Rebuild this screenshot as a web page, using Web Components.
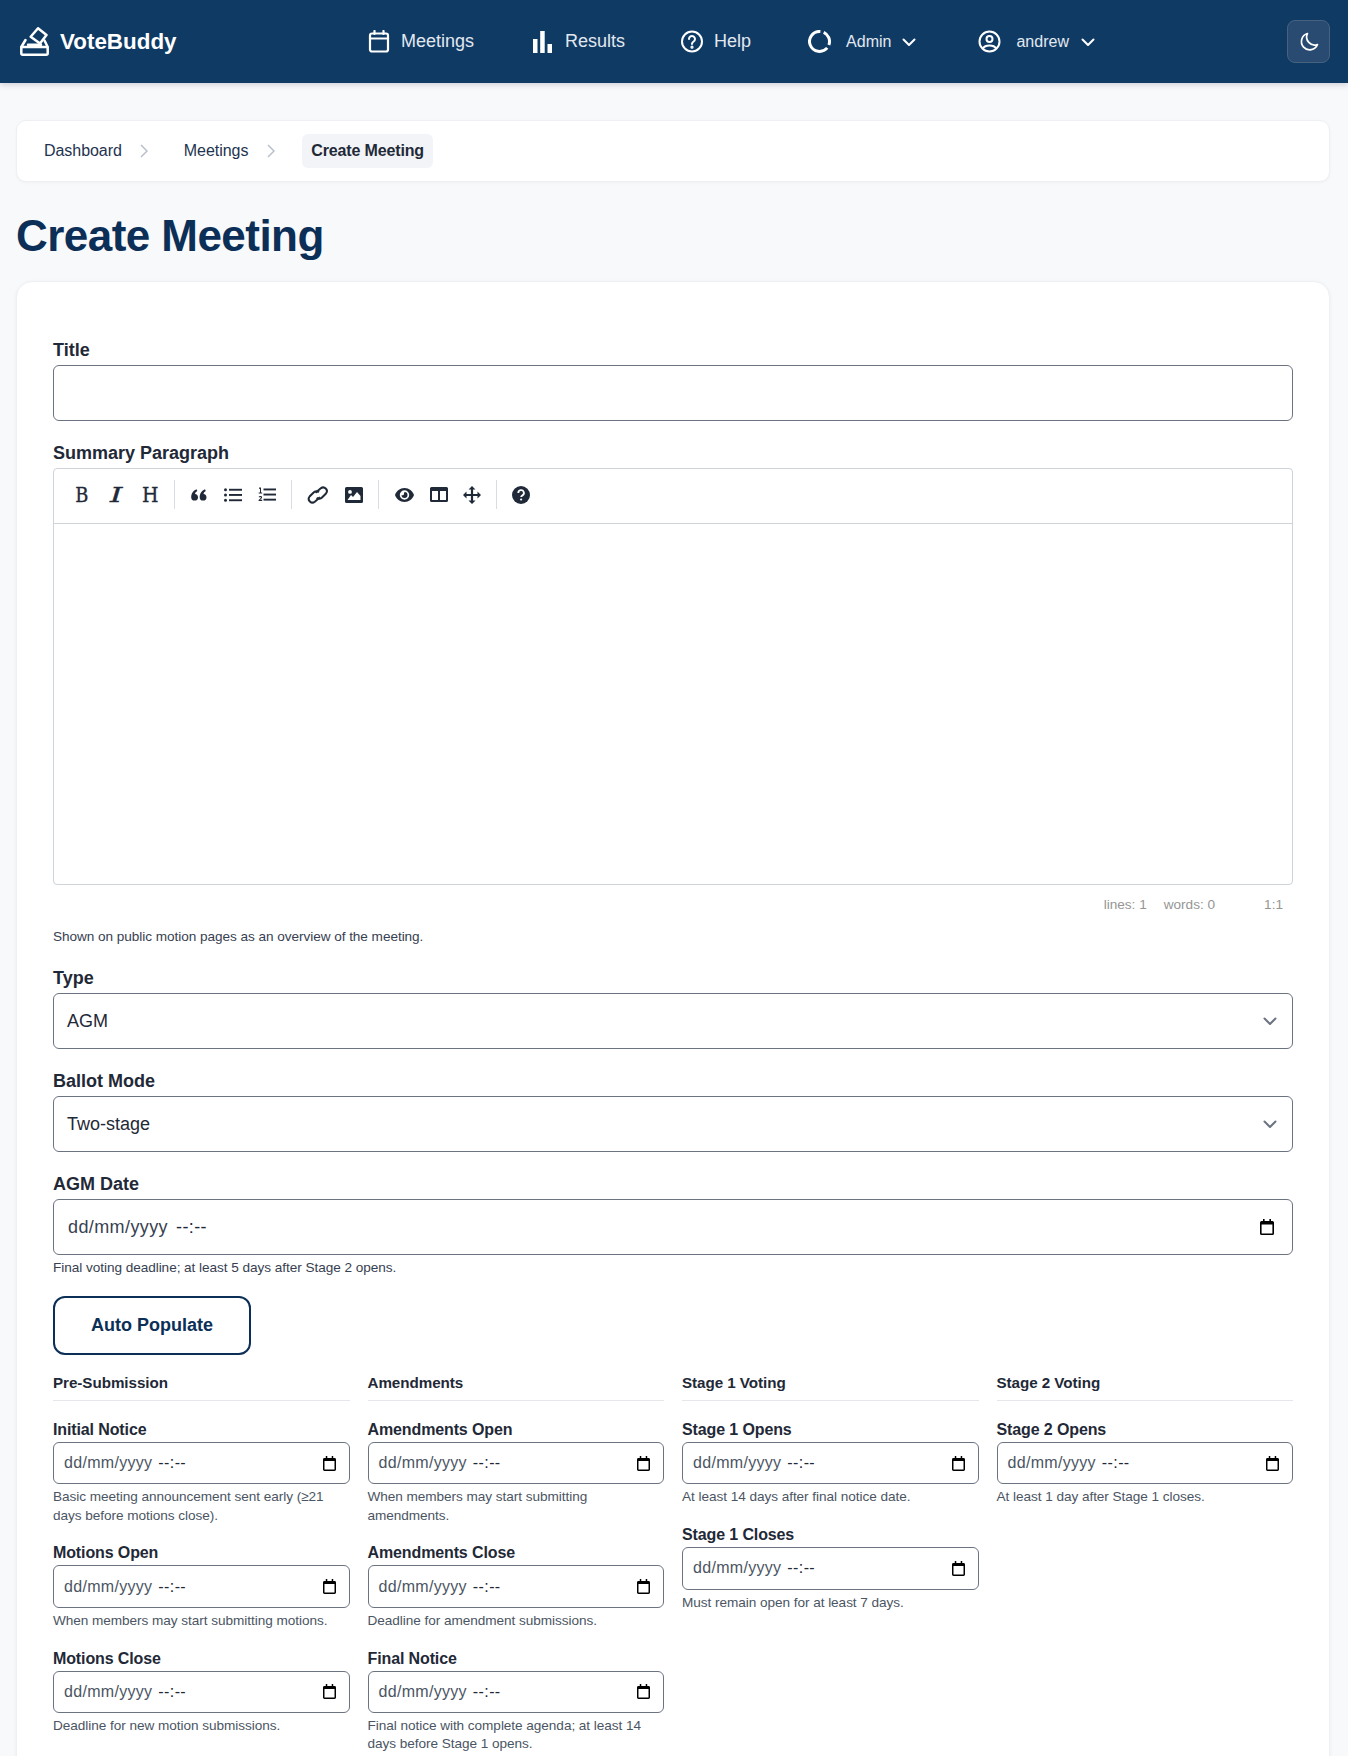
<!DOCTYPE html>
<html lang="en"><head><meta charset="utf-8"><title>Create Meeting</title>
<style>
html,body{margin:0;padding:0;height:1756px;overflow:hidden}
body{background:#f8f9fb;font-family:"Liberation Sans",Arial,sans-serif;color:#1f2937;display:flex;flex-direction:column}
</style></head><body>
<vb-navbar></vb-navbar>
<vb-page>
  <vb-breadcrumb></vb-breadcrumb>
  <h1>Create Meeting</h1>
  <vb-card>
    <vb-field label="Title"><vb-box big></vb-box></vb-field>
    <vb-field label="Summary Paragraph" help="Shown on public motion pages as an overview of the meeting."><vb-editor></vb-editor></vb-field>
    <vb-field label="Type"><vb-box big select>AGM</vb-box></vb-field>
    <vb-field label="Ballot Mode"><vb-box big select>Two-stage</vb-box></vb-field>
    <vb-field label="AGM Date" help="Final voting deadline; at least 5 days after Stage 2 opens." tight><vb-box big date></vb-box></vb-field>
    <vb-button>Auto Populate</vb-button>
    <vb-schedule>
      <vb-column heading="Pre-Submission">
        <vb-date-field label="Initial Notice" help="Basic meeting announcement sent early (≥21 days before motions close)."></vb-date-field>
        <vb-date-field label="Motions Open" help="When members may start submitting motions."></vb-date-field>
        <vb-date-field label="Motions Close" help="Deadline for new motion submissions."></vb-date-field>
      </vb-column>
      <vb-column heading="Amendments">
        <vb-date-field label="Amendments Open" help="When members may start submitting amendments."></vb-date-field>
        <vb-date-field label="Amendments Close" help="Deadline for amendment submissions."></vb-date-field>
        <vb-date-field label="Final Notice" help="Final notice with complete agenda; at least 14 days before Stage 1 opens."></vb-date-field>
      </vb-column>
      <vb-column heading="Stage 1 Voting">
        <vb-date-field label="Stage 1 Opens" help="At least 14 days after final notice date."></vb-date-field>
        <vb-date-field label="Stage 1 Closes" help="Must remain open for at least 7 days."></vb-date-field>
      </vb-column>
      <vb-column heading="Stage 2 Voting">
        <vb-date-field label="Stage 2 Opens" help="At least 1 day after Stage 1 closes."></vb-date-field>
      </vb-column>
    </vb-schedule>
  </vb-card>
</vb-page>
<script>
const CAL='<svg class="cal" viewBox="0 0 14 16"><path fill="#000" d="M3 0h1.600v2h4.800V0H11v2h1.400A1.600 1.600 0 0 1 14 3.600v10.800a1.600 1.600 0 0 1-1.600 1.600H1.600A1.600 1.600 0 0 1 0 14.400V3.600A1.600 1.600 0 0 1 1.600 2H3zM1.600 5.400v9h10.800v-9z"/></svg>';
const CHEV=(c,w,s)=>`<svg width="${s}" height="${s}" viewBox="0 0 16 16" fill="none" stroke="${c}" stroke-width="${w}" stroke-linecap="round" stroke-linejoin="round" style="display:block;flex:none"><path d="M2.500 5.500 8 11l5.500-5.500"/></svg>`;
function def(name,css,html){
  customElements.define(name,class extends HTMLElement{
    connectedCallback(){
      if(this.shadowRoot)return;
      const r=this.attachShadow({mode:'open'});
      r.innerHTML=`<style>${css}</style>`+(typeof html==='function'?html(this):html);
    }
  });
}
def('vb-navbar',`
:host{display:flex;flex:none;align-items:center;height:83px;background:#0f3a64;box-shadow:0 2px 6px rgba(15,30,60,.18);color:#fff;position:relative;z-index:1;box-sizing:border-box;padding:0 18px 0 20px}
.logo{display:flex;align-items:center;gap:11px;font-size:22.400px;font-weight:700;width:348px;color:#fff}
svg{display:block;flex:none}
nav{display:flex;align-items:center;flex:1;color:#e2e8f0}
.i{display:flex;align-items:center;font-size:18px;gap:11px}
.s{font-size:16px}
button{width:43px;height:43px;padding:0;display:flex;align-items:center;justify-content:center;background:#294b72;border:1px solid #47627f;border-radius:8px}
`,`
<div class="logo"><svg width="29" height="29" viewBox="0 0 29 29" fill="none" stroke="#fff" stroke-width="2.500" stroke-linejoin="round" stroke-linecap="round"><path d="M10.700 9.700 18 1.300 26.500 8 20 16.500z"/><path d="M5.500 13 1.300 20M24.500 13.500 27.700 20M8 17.800H21"/><rect x="1.300" y="20" width="26.400" height="7.700" rx="1.500"/></svg><span>VoteBuddy</span></div>
<nav>
<div class="i" style="margin-right:58px"><svg width="22" height="23" viewBox="0 0 22 23" fill="none" stroke="#fff" stroke-width="2.200" stroke-linecap="round"><rect x="2" y="3.500" width="18" height="18" rx="2"/><path d="M2 8.500H20M6.500 1v3M15.500 1v3"/></svg><span>Meetings</span></div>
<div class="i" style="margin-right:56px;gap:13px;margin-left:1px"><svg width="19" height="23" viewBox="0 0 19 23" fill="#fff"><rect x="0" y="9" width="4.500" height="14"/><rect x="7.200" y="1" width="4.500" height="22"/><rect x="14.500" y="14" width="4.500" height="9"/></svg><span>Results</span></div>
<div class="i" style="margin-right:57px"><svg width="22" height="23" viewBox="0 0 22 23" fill="none" stroke="#fff" stroke-width="2"><circle cx="11" cy="11.500" r="10"/><path stroke-linecap="round" d="M8 9a3 3 0 1 1 4.600 2.500c-1 .7-1.600 1.300-1.600 2.500"/><circle cx="11" cy="17.200" r=".6" fill="#fff"/></svg><span>Help</span></div>
<div class="i s" style="margin-right:61px;gap:15px"><svg width="23" height="23" viewBox="0 0 23 23" fill="none" stroke="#fff" stroke-width="3"><path d="M19.200 17.900A10 10 0 1 1 12.400 1.500"/><path d="M15.700 2.400A10 10 0 0 1 20.900 14.900"/></svg><span>Admin</span><span style="margin-left:-5px;display:block">${CHEV('#fff',2,16)}</span></div>
<div class="i s" style="gap:15px"><svg width="23" height="23" viewBox="0 0 23 23" fill="none" stroke="#fff" stroke-width="2"><circle cx="11.500" cy="11.500" r="10"/><circle cx="11.500" cy="9" r="3"/><path d="M4.700 18.500c1.300-2 3.800-3 6.800-3s5.500 1 6.800 3"/></svg><span>andrew</span><span style="margin-left:-4px;display:block">${CHEV('#fff',2,16)}</span></div>
</nav>
<button aria-label="Theme"><svg width="20" height="20" viewBox="0 0 20 20" fill="none" stroke="#fff" stroke-width="1.700" stroke-linejoin="round"><path d="M8.500 1.500A8.300 8.300 0 1 0 18.500 12.500 8 8 0 0 1 8.500 1.500z"/></svg></button>
`);
def('vb-page',`
:host{display:block;flex:1;min-height:0;overflow:hidden;padding:37px 18px 0 16px}
::slotted(h1){margin:29px 0 0;font-size:44px;line-height:50px;height:50px;font-weight:700;color:#0c2f58;letter-spacing:-.55px}
`,`<slot></slot>`);
def('vb-breadcrumb',`
:host{display:flex;align-items:center;height:62px;box-sizing:border-box;background:#fff;border:1px solid #eef0f4;border-radius:10px;box-shadow:0 1px 3px rgba(0,0,0,.04);padding:0 0 0 27px;font-size:16px;color:#1e3350}
a{display:block;letter-spacing:-.05px}
svg{display:block;flex:none}
b{display:block;background:#f2f4f7;border-radius:6px;padding:0 9px;line-height:34px;height:34px;color:#1f2937;font-weight:700;letter-spacing:-.15px}
`,`<a>Dashboard</a><svg style="margin:0 36px 0 18px" width="8" height="14" viewBox="0 0 8 14" fill="none" stroke="#b9c0cb" stroke-width="1.500"><path d="M1 1l6 6-6 6"/></svg><a>Meetings</a><svg style="margin:0 27px 0 19px" width="8" height="14" viewBox="0 0 8 14" fill="none" stroke="#b9c0cb" stroke-width="1.500"><path d="M1 1l6 6-6 6"/></svg><b>Create Meeting</b>`);
def('vb-card',`
:host{display:block;margin-top:20px;background:#fff;border:1px solid #eef0f4;border-radius:16px;box-shadow:0 1px 4px rgba(0,0,0,.05);padding:57.500px 36px 80px 36px;box-sizing:border-box}
`,`<slot></slot>`);
def('vb-field',`
:host{display:block;margin-bottom:21.500px}
:host([tight]){margin-bottom:0}
label{display:block;font-size:18px;font-weight:700;line-height:21.500px;color:#1f2937;margin-bottom:4px}
p{margin:4px 0 0;font-size:13.600px;line-height:18px;color:#374151;letter-spacing:-.05px}
`,h=>`<label>${h.getAttribute('label')}</label><slot></slot>${h.getAttribute('help')?`<p>${h.getAttribute('help')}</p>`:''}`);
def('vb-box',`
:host{display:flex;align-items:center;justify-content:space-between;box-sizing:border-box;height:42.400px;border:1px solid #6b7280;border-radius:6px;background:#fff;font-size:16px;color:#4b5563;padding:0 13px 0 10px}
:host([big]){height:56px;font-size:18px;padding:0 14px 0 13px;color:#1f2937}
:host([big][date]){padding:0 18px 0 14px;color:#374151}
.d{letter-spacing:.3px}
:host([big]) .d{letter-spacing:.4px}
.t{margin-left:6px;color:#1f2937;letter-spacing:.4px}
:host([big]) .t{margin-left:8px}
.cal{display:block;flex:none;width:13px;height:15px}
:host([big]) .cal{width:14px;height:16px}
`,h=>h.hasAttribute('date')?`<span><span class="d">dd/mm/yyyy</span><span class="t">--:--</span></span>${CAL}`:`<span><slot></slot></span>`+(h.hasAttribute('select')?CHEV('#6b7280',2,16):''));
def('vb-editor',`
:host{display:block}
.ed{height:417px;box-sizing:border-box;border:1px solid #ced4da;border-radius:4px;background:#fff}
.tb{height:55px;box-sizing:border-box;border-bottom:1px solid #ced4da;display:flex;align-items:center;padding:0 0 3px 11px;flex:none}
.b{width:34px;display:flex;justify-content:center;align-items:center;height:30px;flex:none}
.t{font-family:"DejaVu Serif",serif;font-size:21px;line-height:24px;color:#1f2937;display:block;-webkit-text-stroke:.35px #1f2937}
.sep{width:1px;height:29px;background:#d9dde2;margin:0 7px;flex:none}
.st{height:39px;box-sizing:border-box;display:flex;justify-content:flex-end;align-items:center;font-size:13.600px;color:#959694;padding:0 10px 0 0}
.st span{display:block}
svg{display:block}
`,`<div class="ed"><div class="tb">
<span class="b"><span class="t" style="transform:scaleX(.85)">B</span></span><span class="b"><span class="t" style="font-style:italic;transform:scaleX(1.500)">I</span></span><span class="b"><span class="t" style="transform:scaleX(.9)">H</span></span><span class="sep"></span>
<span class="b"><svg width="16" height="12" viewBox="0 0 16 12" fill="#1f2937"><path d="M7 8.200A3.400 3.400 0 1 1 .2 8.200C.2 5 1.500 1.800 5.500.2L6.300 2C4.800 2.800 4.200 3.800 4 5A3.400 3.400 0 0 1 7 8.200zM15.500 8.200A3.400 3.400 0 1 1 8.700 8.200C8.700 5 10 1.800 14 .2L14.800 2C13.300 2.800 12.700 3.800 12.500 5A3.400 3.400 0 0 1 15.500 8.200z"/></svg></span>
<span class="b"><svg width="18" height="14" viewBox="0 0 18 14" fill="#1f2937"><circle cx="1.500" cy="1.700" r="1.500"/><circle cx="1.500" cy="7" r="1.500"/><circle cx="1.500" cy="12.300" r="1.500"/><rect x="5" y=".8" width="13" height="1.900"/><rect x="5" y="6" width="13" height="1.900"/><rect x="5" y="11.300" width="13" height="1.900"/></svg></span>
<span class="b"><svg width="18" height="15" viewBox="0 0 18 15" fill="#1f2937"><rect x="5.500" y="1.500" width="12.500" height="1.900"/><rect x="5.500" y="6.600" width="12.500" height="1.900"/><rect x="5.500" y="11.700" width="12.500" height="1.900"/><path d="M1.200.5H3v5H4.200V6.500H.7V5.500H2V1.800L1 2zM.7 9.500c.5-.6 3.400-1 3.400.8 0 1.200-1.500 1.900-2 2.500h2.100V14H.6v-1c.8-.9 2.200-1.800 2.200-2.600 0-.7-1.200-.5-1.800 0z"/></svg></span><span class="sep"></span>
<span class="b" style="margin-left:2px"><svg width="22" height="18" viewBox="0 0 22 18" fill="none" stroke="#1f2937" stroke-width="2"><path d="M8.500 6.800 13.800 2.300a3.700 3.700 0 0 1 5.200 5.200L15 11.500a3.700 3.700 0 0 1-5.300.2"/><path d="M13 11.200 7.800 15.700a3.700 3.700 0 0 1-5.200-5.200L6.600 6.500a3.700 3.700 0 0 1 5.300-.2"/></svg></span>
<span class="b" style="margin-left:2px"><svg width="18" height="16" viewBox="0 0 18 16"><path fill="#1f2937" fill-rule="evenodd" d="M1.500 0h15A1.500 1.500 0 0 1 18 1.500v13a1.500 1.500 0 0 1-1.500 1.500h-15A1.500 1.500 0 0 1 0 14.500v-13A1.500 1.500 0 0 1 1.500 0zM5 3a1.900 1.900 0 1 0 0 3.800A1.900 1.900 0 0 0 5 3zM2.500 13h13V9L12 5 8 10 6 8z"/></svg></span><span class="sep"></span>
<span class="b" style="margin-left:1px"><svg width="21" height="14" viewBox="0 0 19 14"><path fill="#1f2937" fill-rule="evenodd" d="M9.500 0C14 0 17.600 3 19 7c-1.400 4-5 7-9.500 7S1.400 11 0 7C1.400 3 5 0 9.500 0zm0 2.300a4.700 4.700 0 1 0 0 9.400 4.700 4.700 0 0 0 0-9.400zm0 1.700a3 3 0 1 1-3 3c.8.600 2.500 0 2.500-1 0-.800 0-1.500.5-2z"/></svg></span>
<span class="b" style="margin-left:1px"><svg width="18" height="15" viewBox="0 0 18 15"><path fill="#1f2937" fill-rule="evenodd" d="M1.500 0h15A1.500 1.500 0 0 1 18 1.500v12a1.500 1.500 0 0 1-1.500 1.500h-15A1.500 1.500 0 0 1 0 13.500v-12A1.500 1.500 0 0 1 1.500 0zM2 4v9h6V4zm8 0v9h6V4z"/></svg></span>
<span class="b" style="margin-left:-1px"><svg width="18" height="18" viewBox="0 0 18 18" fill="#1f2937"><path d="M9 0l3.500 3.500h-2.400v4.400h4.400V5.500L18 9l-3.500 3.500v-2.400h-4.400v4.400h2.400L9 18l-3.500-3.500h2.400v-4.400H3.500v2.400L0 9l3.500-3.500v2.400h4.400V3.500H5.500z"/></svg></span><span class="sep"></span>
<span class="b"><svg width="18" height="18" viewBox="0 0 18 18"><circle cx="9" cy="9" r="9" fill="#1f2937"/><path d="M6.300 7a2.800 2.800 0 1 1 4.200 2.400C9.500 10 9.100 10.400 9.100 11" fill="none" stroke="#fff" stroke-width="1.800"/><circle cx="9.100" cy="13.500" r="1.100" fill="#fff"/></svg></span>
</div></div>
<div class="st"><span>lines: 1</span><span style="margin-left:17px">words: 0</span><span style="margin-left:49px">1:1</span></div>`);
def('vb-button',`
:host{display:block;margin-top:19px;width:198px}
button{display:block;width:198px;height:59px;box-sizing:border-box;background:#fff;border:2.500px solid #0c2f58;border-radius:12px;font:700 18px "Liberation Sans",Arial,sans-serif;color:#0c2f58;padding:0}
`,`<button><slot></slot></button>`);
def('vb-schedule',`
:host{display:grid;grid-template-columns:repeat(4,1fr);column-gap:18px;margin-top:17px;align-items:start}
`,`<slot></slot>`);
def('vb-column',`
:host{display:block;min-width:0}
h3{margin:0 0 19px;font-size:15.200px;line-height:22px;height:29px;box-sizing:border-box;font-weight:700;color:#1f2937;border-bottom:1px solid #e5e7eb;letter-spacing:-.05px}
`,h=>`<h3>${h.getAttribute('heading')}</h3><slot></slot>`);
def('vb-date-field',`
:host{display:block;margin-bottom:18.600px}
label{display:block;font-size:16px;font-weight:700;line-height:18.400px;padding-top:1px;margin-bottom:2.600px;color:#1f2937;letter-spacing:-.12px}
p{margin:4px 0 0;font-size:13.600px;line-height:18.200px;color:#4b5563;letter-spacing:-.05px}
`,h=>`<label>${h.getAttribute('label')}</label><vb-box date></vb-box><p>${h.getAttribute('help')}</p>`);
</script>
</body></html>
